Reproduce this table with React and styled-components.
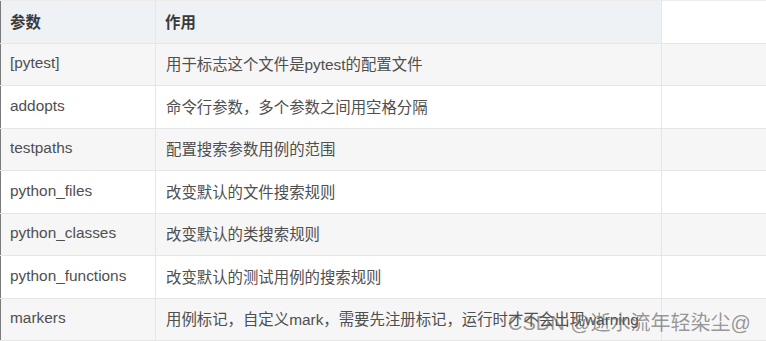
import React from "react";
import styled, { createGlobalStyle } from "styled-components";

const Global = createGlobalStyle`
  html, body { margin: 0; padding: 0; background: #ffffff; }
  body { font-family: "Liberation Sans", Arial, "Noto Sans CJK SC", sans-serif; }
`;

const Page = styled.div`
  position: relative;
  width: 766px;
  height: 341px;
  overflow: hidden;
  background: #ffffff;
`;

const Table = styled.table`
  width: 800px;
  border-collapse: collapse;
  table-layout: fixed;
  border-left: 1px solid #7a7a7a;
  font-size: 15.4px;
`;

const Row = styled.tr`
  height: 42.5px;
  background: ${(p) => (p.$striped ? "#f6f6f6" : "#ffffff")};
`;

const HeadCell = styled.th`
  text-align: left;
  font-weight: bold;
  color: #3a3a3a;
  padding: 0 0 1px 9px;
  background: ${(p) => (p.$blank ? "#ffffff" : "#eff2f5")};
  border-top: 1px solid #ececec;
  border-right: 1px solid #e6e6e6;
  border-bottom: 1px solid #e6e6e6;
  font-family: "Liberation Sans", Arial, "Noto Sans CJK SC", sans-serif;
`;

const Cell = styled.td`
  color: #4f4f4f;
  padding: 0 0 2px ${(p) => (p.$first ? "9px" : "10px")};
  border-right: 1px solid #e6e6e6;
  border-bottom: 1px solid #e6e6e6;
  white-space: nowrap;
  overflow: hidden;
`;

const Watermark = styled.div`
  position: absolute;
  left: 508px;
  top: 307px;
  font-size: 20px;
  color: rgba(95, 95, 95, 0.65);
  font-family: "Liberation Sans", Arial, "Noto Sans CJK SC", sans-serif;
  white-space: nowrap;
  pointer-events: none;
`;

const rows = [
  ["[pytest]", "用于标志这个文件是pytest的配置文件"],
  ["addopts", "命令行参数，多个参数之间用空格分隔"],
  ["testpaths", "配置搜索参数用例的范围"],
  ["python_files", "改变默认的文件搜索规则"],
  ["python_classes", "改变默认的类搜索规则"],
  ["python_functions", "改变默认的测试用例的搜索规则"],
  ["markers", "用例标记，自定义mark，需要先注册标记，运行时才不会出现warning"],
];

export default function App() {
  return (
    <>
      <Global />
      <Page>
        <Table>
          <colgroup>
            <col style={{ width: 155 }} />
            <col style={{ width: 506 }} />
            <col />
          </colgroup>
          <thead>
            <Row>
              <HeadCell>参数</HeadCell>
              <HeadCell>作用</HeadCell>
              <HeadCell $blank />
            </Row>
          </thead>
          <tbody>
            {rows.map(([k, v], i) => (
              <Row key={k} $striped={i % 2 === 0}>
                <Cell $first>{k}</Cell>
                <Cell>{v}</Cell>
                <Cell />
              </Row>
            ))}
          </tbody>
        </Table>
        <Watermark>CSDN @逝水流年轻染尘@</Watermark>
      </Page>
    </>
  );
}
